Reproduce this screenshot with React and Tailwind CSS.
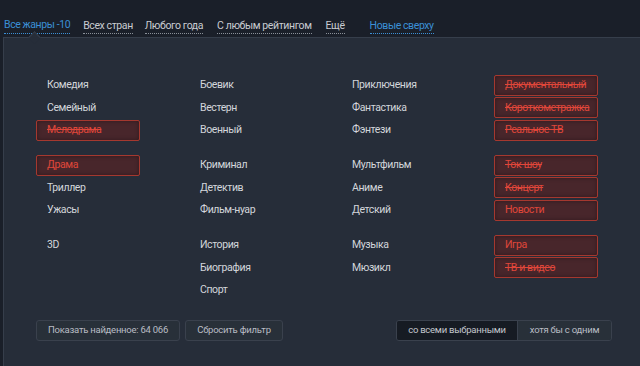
import React from "react";

const groups = [
  [
    [
      { t: "Комедия" },
      { t: "Семейный" },
      { t: "Мелодрама", red: true, strike: true },
    ],
    [{ t: "Боевик" }, { t: "Вестерн" }, { t: "Военный" }],
    [{ t: "Приключения" }, { t: "Фантастика" }, { t: "Фэнтези" }],
    [
      { t: "Документальный", red: true, strike: true },
      { t: "Короткометражка", red: true, strike: true },
      { t: "Реальное ТВ", red: true, strike: true },
    ],
  ],
  [
    [{ t: "Драма", red: true }, { t: "Триллер" }, { t: "Ужасы" }],
    [{ t: "Криминал" }, { t: "Детектив" }, { t: "Фильм-нуар" }],
    [{ t: "Мультфильм" }, { t: "Аниме" }, { t: "Детский" }],
    [
      { t: "Ток-шоу", red: true, strike: true },
      { t: "Концерт", red: true, strike: true },
      { t: "Новости", red: true },
    ],
  ],
  [
    [{ t: "3D" }],
    [{ t: "История" }, { t: "Биография" }, { t: "Спорт" }],
    [{ t: "Музыка" }, { t: "Мюзикл" }],
    [
      { t: "Игра", red: true },
      { t: "ТВ и видео", red: true, strike: true },
    ],
  ],
];

function Cell({ item }) {
  if (item.red) {
    return (
      <div className="h-[22.5px] flex items-center">
        <div className="w-[104px] h-[21px] border border-[#a5382f] bg-[#48262b] rounded-[2px] flex items-center pl-[10px] whitespace-nowrap overflow-hidden shadow-[inset_0_0_4px_rgba(0,0,0,0.35)]">
          <span
            className={
              "text-[#e0463a] " + (item.strike ? "line-through decoration-[#e0463a]" : "")
            }
          >
            {item.t}
          </span>
        </div>
      </div>
    );
  }
  return (
    <div className="h-[22.5px] flex items-center pl-[11px] text-[#d3d6db]">
      {item.t}
    </div>
  );
}

function NavLink({ children, blue }) {
  return (
    <span
      className={
        "border-b border-dotted pb-[1px] leading-[14px] " +
        (blue ? "text-[#3b8fd6] border-[#3b8fd6]" : "text-[#c9ccd2] border-[#8a9099]")
      }
    >
      {children}
    </span>
  );
}

export default function App() {
  return (
    <div
      className="w-[640px] h-[366px] bg-[#1a1f29] overflow-hidden flex flex-col text-[10.5px] tracking-[-0.4px]"
      style={{ fontFamily: "Roboto, 'Noto Sans', sans-serif" }}
    >
      <div className="h-[37px] flex items-start pt-[18px] pl-[4px]">
        <div className="flex items-center">
          <NavLink blue>Все жанры -10</NavLink>
          <span className="ml-[13px]"><NavLink>Всех стран</NavLink></span>
          <span className="ml-[12px]"><NavLink>Любого года</NavLink></span>
          <span className="ml-[14px]"><NavLink>С любым рейтингом</NavLink></span>
          <span className="ml-[14px]"><NavLink>Ещё</NavLink></span>
          <span className="ml-[25px]"><NavLink blue>Новые сверху</NavLink></span>
        </div>
      </div>
      <div className="relative flex-1 ml-[3px] bg-[#262d39] border-l border-t border-[#363e4b]">
        <div className="absolute -top-[5px] left-[26px] w-[9px] h-[9px] rotate-45 bg-[#262d39] border-l border-t border-[#363e4b]" />
        <div className="pt-[36px] pl-[32px] flex flex-col gap-[12.5px]">
          {groups.map((g, gi) => (
            <div key={gi} className="grid grid-cols-[153px_152px_153px_104px]">
              {g.map((col, ci) => (
                <div key={ci} className="flex flex-col">
                  {col.map((item, ii) => (
                    <Cell key={ii} item={item} />
                  ))}
                </div>
              ))}
            </div>
          ))}
        </div>
        <div className="mt-[18px] pl-[32px] pr-[28px] flex items-center text-[9.5px] tracking-[-0.25px] text-[#b9bdc4]">
          <div className="w-[144px] h-[21px] border border-[#3a414d] bg-[#283039] rounded-[3px] flex items-center justify-center">
            Показать найденное: 64 066
          </div>
          <div className="ml-[5px] w-[98px] h-[21px] border border-[#3a414d] bg-[#283039] rounded-[3px] flex items-center justify-center">
            Сбросить фильтр
          </div>
          <div className="ml-auto flex h-[21px] border border-[#3a414d] rounded-[3px] overflow-hidden">
            <div className="w-[120px] bg-[#161b23] flex items-center justify-center text-[#c3c7cd]">
              со всеми выбранными
            </div>
            <div className="w-[94px] bg-[#283039] border-l border-[#3a414d] flex items-center justify-center">
              хотя бы с одним
            </div>
          </div>
        </div>
      </div>
    </div>
  );
}
